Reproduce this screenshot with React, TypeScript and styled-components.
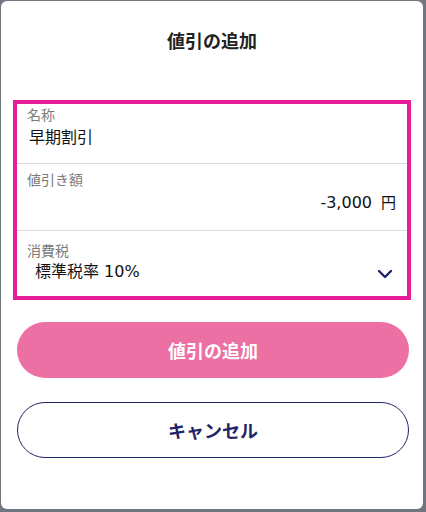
import React from "react";
import styled, { createGlobalStyle } from "styled-components";

const Global = createGlobalStyle`
  html, body { margin: 0; padding: 0; background: #70757f; }
  body { font-family: "Noto Sans", "Noto Sans CJK JP", sans-serif; }
  * { box-sizing: border-box; }
`;

const Page = styled.div`
  width: 426px;
  height: 512px;
  padding: 1px 3px 3px 1px;
  background: #70757f;
`;

const Card = styled.div`
  height: 508px;
  background: #fff;
  border-radius: 6px;
  display: flex;
  flex-direction: column;
`;

const Header = styled.div`
  height: 99px;
  padding-top: 26px;
  text-align: center;
  font-family: "Noto Sans CJK JP", sans-serif;
  font-size: 18px;
  font-weight: 700;
  line-height: 26px;
  color: #222;
`;

const FormBox = styled.div`
  margin: 0 12px;
  border: 4px solid #e61e9c;
  display: flex;
  flex-direction: column;
`;

const Row = styled.div<{ $h: number; $divider?: boolean }>`
  height: ${(p) => p.$h}px;
  display: flex;
  flex-direction: column;
  padding: 0 10px;
  border-bottom: ${(p) => (p.$divider ? "1px solid #dcdcdc" : "none")};
`;

const Label = styled.div<{ $top: number }>`
  margin-top: ${(p) => p.$top}px;
  font-family: "Noto Sans CJK JP", sans-serif;
  font-size: 14px;
  line-height: 18px;
  color: #7b7b7b;
`;

const valueFont = `
  font-family: "DejaVu Sans", "Noto Sans CJK JP", sans-serif;
  font-size: 16px;
  line-height: 22px;
  color: #111;
`;

const Value = styled.div<{ $top: number }>`
  margin-top: ${(p) => p.$top}px;
  padding-left: 2px;
  ${valueFont}
`;

const AmountLine = styled.div`
  margin-top: 4px;
  display: flex;
  justify-content: flex-end;
  align-items: baseline;
  gap: 9px;
  padding-right: 1px;
  ${valueFont}
`;

const Unit = styled.span`
  font-size: 15px;
`;

const SelectLine = styled.div`
  margin-top: 2px;
  display: flex;
  justify-content: space-between;
  align-items: center;
  padding-left: 8px;
  padding-right: 4px;
  ${valueFont}
`;

const Buttons = styled.div`
  display: flex;
  flex-direction: column;
  gap: 24px;
  margin: 22px 14px 0 16px;
`;

const Button = styled.button<{ $primary?: boolean }>`
  height: 56px;
  border-radius: 28px;
  font-family: "Noto Sans CJK JP", "Noto Sans", sans-serif;
  font-size: 18px;
  font-weight: 700;
  cursor: pointer;
  background: ${(p) => (p.$primary ? "#ec70a3" : "#fff")};
  color: ${(p) => (p.$primary ? "#fff" : "#1f2466")};
  border: ${(p) => (p.$primary ? "none" : "1px solid #1f2466")};
`;

const ChevronBox = styled.span`
  display: flex;
  margin-top: 4px;
`;

const Chevron = () => (
  <ChevronBox>
    <svg width="16" height="10" viewBox="0 0 16 10" fill="none">
      <path d="M2 2 L8 8 L14 2" stroke="#1f2466" strokeWidth="2.4" strokeLinecap="round" strokeLinejoin="round" />
    </svg>
  </ChevronBox>
);

export default function App() {
  return (
    <>
      <Global />
      <Page>
        <Card>
          <Header>値引の追加</Header>
          <FormBox>
            <Row $h={60} $divider>
              <Label $top={1}>名称</Label>
              <Value $top={4}>早期割引</Value>
            </Row>
            <Row $h={67} $divider>
              <Label $top={6}>値引き額</Label>
              <AmountLine>
                <span>-3,000</span>
                <Unit>円</Unit>
              </AmountLine>
            </Row>
            <Row $h={65}>
              <Label $top={10}>消費税</Label>
              <SelectLine>
                <span>標準税率 10%</span>
                <Chevron />
              </SelectLine>
            </Row>
          </FormBox>
          <Buttons>
            <Button $primary>値引の追加</Button>
            <Button>キャンセル</Button>
          </Buttons>
        </Card>
      </Page>
    </>
  );
}
